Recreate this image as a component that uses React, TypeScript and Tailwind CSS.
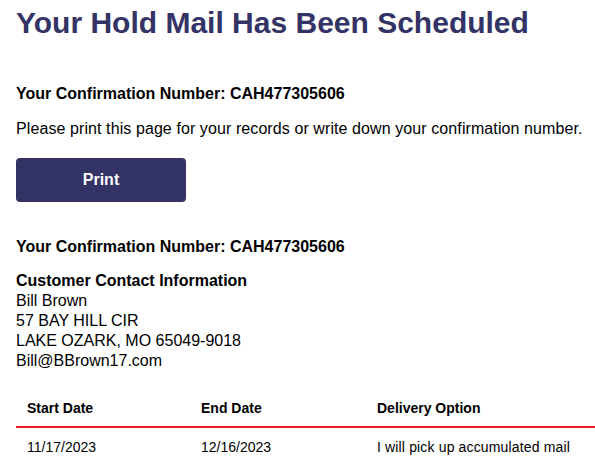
import React from "react";

export default function App() {
  return (
    <div className="min-h-[472px] bg-white pl-4 font-['Liberation_Sans',Arial,sans-serif] text-black">
      <h1 className="pt-[5px] text-[30px] leading-[36px] font-bold text-[#333366]">
        Your Hold Mail Has Been Scheduled
      </h1>
      <p className="mt-[41px] text-[16px] leading-[24px] font-bold">
        Your Confirmation Number: CAH477305606
      </p>
      <p className="mt-[11px] text-[16px] leading-[24px] tracking-[0.09px]">
        Please print this page for your records or write down your confirmation number.
      </p>
      <button className="mt-[17px] flex h-[44px] w-[170px] items-center justify-center rounded-[4px] bg-[#333366] text-[16px] font-bold text-white">
        Print
      </button>
      <p className="mt-[33px] text-[16px] leading-[24px] font-bold">
        Your Confirmation Number: CAH477305606
      </p>
      <div className="mt-[12px] text-[16px] leading-[20px]">
        <p className="font-bold">Customer Contact Information</p>
        <p>Bill Brown</p>
        <p>57 BAY HILL CIR</p>
        <p>LAKE OZARK, MO 65049-9018</p>
        <p>Bill@BBrown17.com</p>
      </div>
      <div className="mt-[17px] text-[14px] leading-[20px]">
        <div className="grid grid-cols-[174px_176px_1fr] border-b-2 border-[#e71921] pt-[10px] pb-[8px] font-bold">
          <div className="pl-[11px]">Start Date</div>
          <div className="pl-[11px]">End Date</div>
          <div className="pl-[11px]">Delivery Option</div>
        </div>
        <div className="grid grid-cols-[174px_176px_1fr] pt-[9px] pb-[9px]">
          <div className="pl-[11px]">11/17/2023</div>
          <div className="pl-[11px]">12/16/2023</div>
          <div className="pl-[11px] tracking-[0.15px]">I will pick up accumulated mail</div>
        </div>
      </div>
    </div>
  );
}
